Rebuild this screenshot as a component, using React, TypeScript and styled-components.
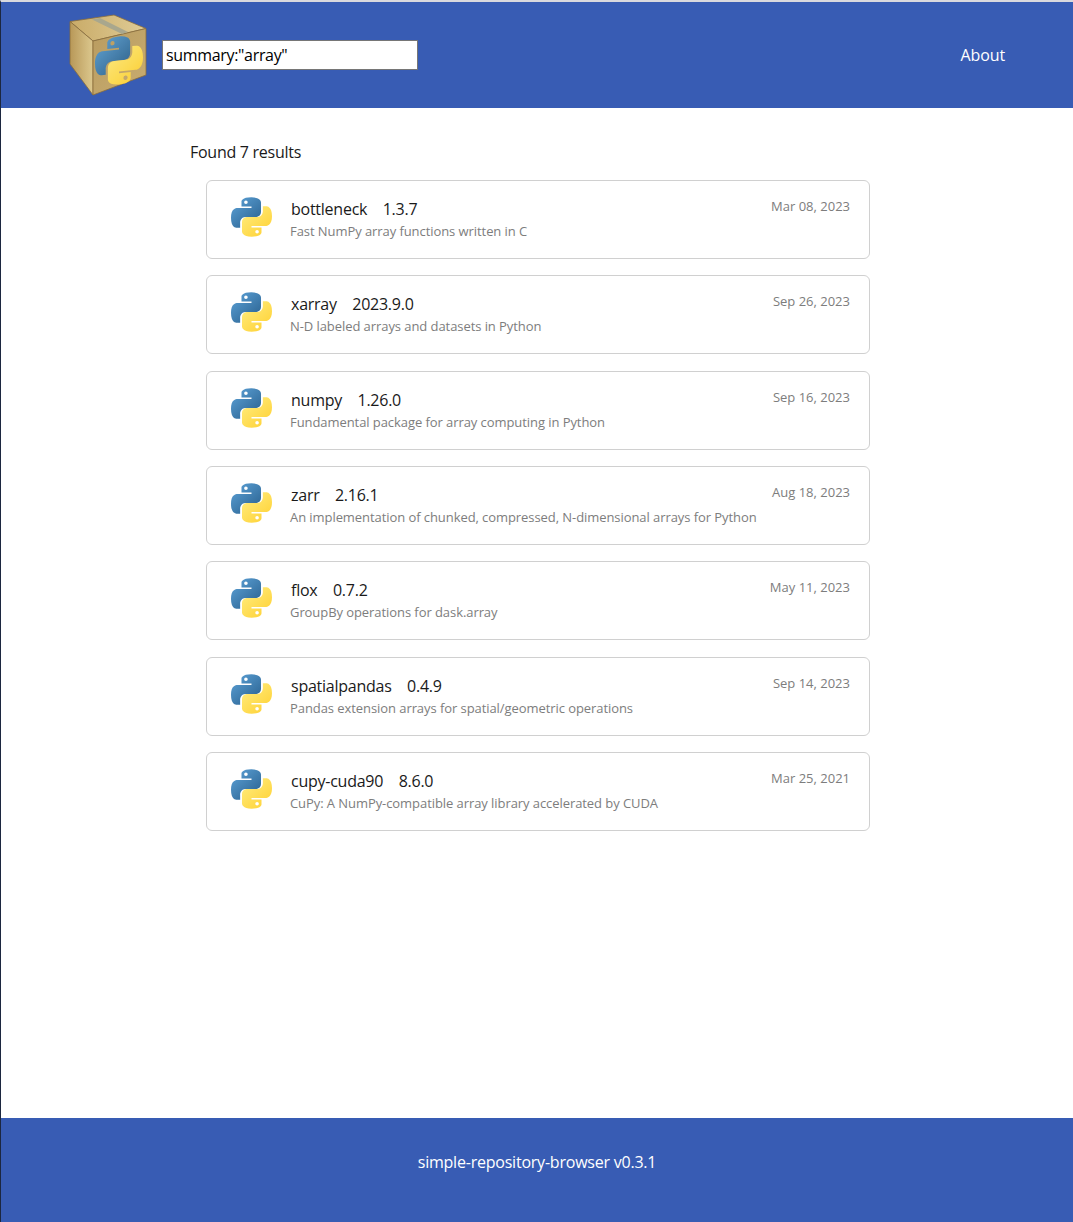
import React from "react";
import styled, { createGlobalStyle } from "styled-components";

const GlobalStyle = createGlobalStyle`
  html, body { margin: 0; padding: 0; background: #fff; }
  body { font-family: "Open Sans", "Noto Sans", sans-serif; color: #1a1a1a; }
  * { box-sizing: border-box; }
`;

const Page = styled.div`
  min-height: 1222px;
  display: flex;
  flex-direction: column;
  border-top: 2px solid #d9d9de;
  border-left: 1px solid #1c2740;
`;
const Header = styled.header`
  height: 106px;
  background: #385cb4;
  display: flex;
  align-items: center;
  padding: 0 68px 0 68px;
`;
const Logo = styled.svg`
  width: 80px;
  height: 82px;
  flex: none;
`;
const SearchInput = styled.input`
  width: 256px;
  height: 30px;
  margin: 0 0 0 13px;
  padding: 0 3px;
  border: 1px solid #767676;
  background: #fff;
  font: 16px "Open Sans", sans-serif;
  letter-spacing: -0.33px;
  color: #000;
  outline: none;
`;
const AboutLink = styled.a`
  margin-left: auto;
  color: #fff;
  font-size: 16px;
  letter-spacing: -0.1px;
  margin-top: -1px;
`;
const Main = styled.main`
  flex: 1;
  width: 664px;
  margin-left: 205px;
`;
const Found = styled.p`
  margin: 34px 0 17.8px -16px;
  font-size: 16px;
  line-height: 20px;
  letter-spacing: -0.27px;
  color: #1a1a1a;
`;
const List = styled.div`
  display: flex;
  flex-direction: column;
  gap: 16.2px;
`;
const Card = styled.div`
  height: 79.2px;
  border: 1px solid #d0d0d0;
  border-radius: 6px;
  padding: 15px 19px 0 24px;
  display: flex;
  background: #fff;
`;
const PyIcon = styled.svg`
  width: 41px;
  height: 42px;
  flex: none;
`;
const Body = styled.div`
  margin-left: 19px;
  flex: 1;
  min-width: 0;
`;
const TitleRow = styled.div`
  display: flex;
  gap: 15.5px;
  font-size: 16px;
  line-height: 20px;
  letter-spacing: -0.25px;
  margin-top: 3px;
  color: #1a1a1a;
`;
const Summary = styled.div`
  font-size: 13px;
  line-height: 16px;
  letter-spacing: -0.07px;
  margin-top: 4px;
  margin-left: -1px;
  color: #7d7d7d;
  white-space: nowrap;
`;
const DateText = styled.div`
  font-size: 13px;
  line-height: 16px;
  color: #7d7d7d;
  margin-top: 2px;
  white-space: nowrap;
`;
const Footer = styled.footer`
  height: 104px;
  background: #385cb4;
  color: #fff;
  font-size: 16px;
  letter-spacing: -0.22px;
  display: flex;
  align-items: center;
  justify-content: center;
  padding-bottom: 16px;
`;

const Python = () => (
  <>
    <path fill="url(#pyb)" d="M49.6 2C24 2 25.6 13.1 25.6 13.1l0 11.5 24.4 0 0 3.4-34.1 0S0 26.2 0 51.6 14 76 14 76l8.3 0 0-11.8s-.4-14 13.8-14l23.8 0s13.3.2 13.3-12.9l0-21.6S75.2 2 49.6 2zM36.4 9.6a4.4 4.4 0 1 1 0 8.8 4.4 4.4 0 0 1 0-8.8z" />
    <path fill="url(#pyy)" d="M50.4 98c25.6 0 24-11.1 24-11.1l0-11.5-24.4 0 0-3.4 34.1 0S100 73.8 100 48.4 86 24 86 24l-8.3 0 0 11.8s.4 14-13.8 14l-23.8 0s-13.3-.2-13.3 12.9l0 21.6S24.8 98 50.4 98zM63.6 90.4a4.4 4.4 0 1 1 0-8.8 4.4 4.4 0 0 1 0 8.8z" />
  </>
);
const Gradients = () => (
  <defs>
    <linearGradient id="pyb" x1="0.1" y1="0.05" x2="0.8" y2="0.85">
      <stop offset="0" stopColor="#5a9fd4" />
      <stop offset="1" stopColor="#306998" />
    </linearGradient>
    <linearGradient id="pyy" x1="0.2" y1="0.2" x2="0.8" y2="0.9">
      <stop offset="0" stopColor="#ffe873" />
      <stop offset="1" stopColor="#ffd43b" />
    </linearGradient>
    <linearGradient id="boxl" x1="0" y1="0" x2="1" y2="0">
      <stop offset="0" stopColor="#b89858" />
      <stop offset="1" stopColor="#dcc88e" />
    </linearGradient>
    <linearGradient id="boxr" x1="0" y1="0" x2="1" y2="1">
      <stop offset="0" stopColor="#b99c60" />
      <stop offset="1" stopColor="#c8ac70" />
    </linearGradient>
    <linearGradient id="boxt" x1="0" y1="0" x2="1" y2="0">
      <stop offset="0" stopColor="#c9ab68" />
      <stop offset="1" stopColor="#e0cc96" />
    </linearGradient>
  </defs>
);

const results = [
  ["bottleneck", "1.3.7", "Fast NumPy array functions written in C", "Mar 08, 2023"],
  ["xarray", "2023.9.0", "N-D labeled arrays and datasets in Python", "Sep 26, 2023"],
  ["numpy", "1.26.0", "Fundamental package for array computing in Python", "Sep 16, 2023"],
  ["zarr", "2.16.1", "An implementation of chunked, compressed, N-dimensional arrays for Python", "Aug 18, 2023"],
  ["flox", "0.7.2", "GroupBy operations for dask.array", "May 11, 2023"],
  ["spatialpandas", "0.4.9", "Pandas extension arrays for spatial/geometric operations", "Sep 14, 2023"],
  ["cupy-cuda90", "8.6.0", "CuPy: A NumPy-compatible array library accelerated by CUDA", "Mar 25, 2021"],
];

export default function App() {
  return (
    <>
      <GlobalStyle />
      <svg width="0" height="0" style={{ position: "absolute" }}>
        <Gradients />
      </svg>
      <Page>
        <Header>
          <Logo viewBox="0 0 80 82">
            <path d="M1 7.5 L45 1 L77 14.5 L24 27 Z" fill="url(#boxt)" stroke="#8a6d3b" strokeWidth="0.8" />
            <path d="M1 7.5 L24 27 L24 81 L1 50 Z" fill="url(#boxl)" stroke="#8a6d3b" strokeWidth="0.8" />
            <path d="M24 27 L77 14.5 L77 61 L24 81 Z" fill="url(#boxr)" stroke="#8a6d3b" strokeWidth="0.8" />
            <path d="M23 5.5 L31 4 L59 18 L53 20 Z" fill="#a9a78d" />
            <g transform="translate(26 24) skewY(-6) scale(.48 .5)" opacity="0.95">
              <Python />
            </g>
          </Logo>
          <SearchInput defaultValue={'summary:"array"'} />
          <AboutLink>About</AboutLink>
        </Header>
        <Main>
          <Found>Found 7 results</Found>
          <List>
            {results.map(([name, version, summary, date]) => (
              <Card key={name}>
                <PyIcon viewBox="0 0 100 100">
                  <Python />
                </PyIcon>
                <Body>
                  <TitleRow>
                    <span>{name}</span>
                    <span>{version}</span>
                  </TitleRow>
                  <Summary>{summary}</Summary>
                </Body>
                <DateText>{date}</DateText>
              </Card>
            ))}
          </List>
        </Main>
        <Footer>simple-repository-browser v0.3.1</Footer>
      </Page>
    </>
  );
}
